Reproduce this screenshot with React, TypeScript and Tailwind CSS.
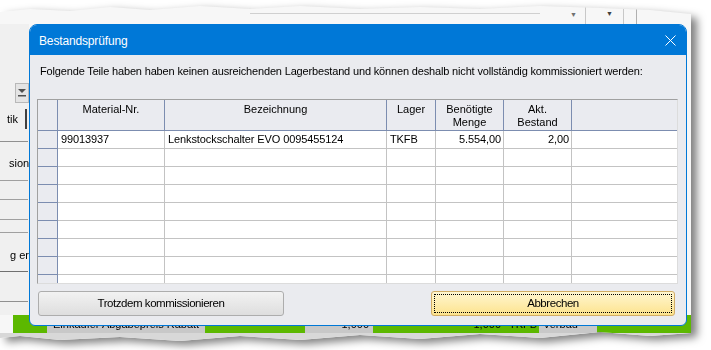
import React from "react";

const widths = ["w-[107px]", "w-[222px]", "w-[49px]", "w-[68px]", "w-[68px]"];
const heads = [["Material-Nr."], ["Bezeichnung"], ["Lager"], ["Benötigte", "Menge"], ["Akt.", "Bestand"]];
const firstRow = ["99013937", "Lenkstockschalter EVO 0095455124", "TKFB", "5.554,00", "2,00"];
const rightAligned = [false, false, false, true, true];

function Grid() {
  const rows = Array.from({ length: 9 }, (_, i) => (i === 0 ? firstRow : ["", "", "", "", ""]));
  return (
    <div className="h-[185px] overflow-hidden border border-t-[#a0a0a0] border-l-[#a0a0a0] border-r-[#dcdcdc] border-b-[#dcdcdc] bg-white">
      {/* header */}
      <div className="flex h-[31px] border-b border-[#7c8db0] bg-[#eaebf0]">
        <div className="w-[20px] shrink-0 border-r border-[#7c8db0]" />
        {heads.map((h, i) => (
          <div
            key={i}
            className={`${widths[i]} shrink-0 border-r border-[#7c8db0] pt-[3px] text-center leading-[13px]`}
          >
            {h.map((l) => (
              <div key={l}>{l}</div>
            ))}
          </div>
        ))}
        <div className="flex-1" />
      </div>
      {rows.map((r, ri) => (
        <div key={ri} className="flex h-[18px]">
          <div className="w-[20px] shrink-0 border-r border-b border-[#7c8db0] bg-[#eaebf0]" />
          {r.map((v, ci) => (
            <div
              key={ci}
              className={`${widths[ci]} shrink-0 border-r border-b border-[#c3c3c3] leading-[17px] whitespace-nowrap tracking-[-0.1px] ${
                rightAligned[ci] ? "pr-[2px] text-right" : "pl-[3px]"
              }`}
            >
              {v}
            </div>
          ))}
          <div className="flex-1 border-b border-[#c3c3c3]" />
        </div>
      ))}
    </div>
  );
}

function Dialog() {
  return (
    <div className="absolute left-[29px] top-[24px] flex h-[302px] w-[658px] flex-col overflow-hidden rounded-t-[8px] rounded-b-[6px] border border-[#0078d7] bg-[#eaebef] text-[11px] text-black">
      <div className="flex h-[30px] shrink-0 items-center justify-between bg-[#0078d7] pl-[9px] pr-[10px] pt-[1px] text-[12px] text-white">
        <span className="tracking-[-0.15px]">Bestandsprüfung</span>
        <svg width="11" height="11" viewBox="0 0 11 11" className="mt-[-1px]">
          <path d="M0.5 0.5 L10.5 10.5 M10.5 0.5 L0.5 10.5" stroke="white" strokeWidth="1" />
        </svg>
      </div>
      <div className="flex flex-1 flex-col px-[7px] pt-[9px] pr-[8px]">
        <p className="pl-[3px] leading-[14px] whitespace-nowrap tracking-[-0.16px]">
          Folgende Teile haben haben keinen ausreichenden Lagerbestand und können deshalb nicht vollständig kommissioniert werden:
        </p>
        <div className="mt-[21px]">
          <Grid />
        </div>
        <div className="mt-[7px] flex justify-between pl-[1px] pr-[3px]">
          <button className="h-[25px] w-[246px] rounded-[3px] border border-[#adadad] bg-gradient-to-b from-[#f2f2f2] to-[#dedede] text-[11.5px] tracking-[-0.45px]">
            Trotzdem kommissionieren
          </button>
          <button className="h-[25px] w-[244px] rounded-[3px] border border-[#d2ad66] bg-gradient-to-b from-[#fff6d0] to-[#fde38c] text-[11.5px] tracking-[-0.45px] outline-1 outline-dotted outline-black outline-offset-[-4px]">
            Abbrechen
          </button>
        </div>
      </div>
    </div>
  );
}

function Backdrop() {
  return (
    <div className="absolute left-0 top-0 [filter:drop-shadow(6px_4px_4px_rgba(0,0,0,0.5))]">
      <div className="flex h-[342px] w-[691px] flex-col bg-[#f7f7f7] text-[11px] [clip-path:polygon(0_12px,30px_9px,70px_11px,110px_7px,150px_10px,200px_6px,250px_9px,300px_6px,360px_9px,420px_7px,480px_9px,540px_6px,600px_8px,650px_10px,691px_14px,691px_333px,650px_336px,600px_332px,540px_338px,480px_334px,420px_339px,360px_335px,300px_340px,240px_336px,180px_341px,120px_337px,60px_340px,20px_336px,0_338px)]">
        {/* top strip */}
        <div className="flex h-[24px] shrink-0 items-end">
          <div className="ml-[250px] mb-[10px] h-px w-[290px] bg-[#d0d0d0]" />
          <div className="ml-[30px] mb-[4px] text-[7px] text-[#707070]">▼</div>
          <div className="ml-[8px] h-[20px] w-px bg-[#c8c8c8]" />
          <div className="ml-[20px] mb-[5px] text-[7px] text-[#404040]">▼</div>
          <div className="ml-[10px] h-[20px] w-px bg-[#c8c8c8]" />
          <div className="ml-[12px] h-[20px] w-px bg-[#b0b0b0]" />
        </div>
        {/* middle */}
        <div className="flex flex-1">
          <div className="flex w-[29px] flex-col bg-[#f0f0f0]">
            <div className="h-[59px]" />
            <div className="ml-[15px] flex h-[20px] w-[14px] flex-col items-center justify-center border border-[#b8b8b8] bg-[#e4e4e4]">
              <svg width="10" height="10" viewBox="0 0 10 10">
                <path d="M1 1 L9 1 L5 5 Z" fill="#505050" />
                <rect x="1" y="7" width="8" height="1.5" fill="#505050" />
              </svg>
            </div>
            <div className="mt-[6px] flex h-[20px] w-[27px] items-center border-r-2 border-[#404040] pl-[7px]">tik</div>
            <div className="mt-[12px] h-px w-[28px] bg-[#909090]" />
            <div className="mt-[10px] h-[22px] pl-[9px] leading-[22px]">sion</div>
            <div className="mt-[6px] h-px w-[28px] bg-[#a0a0a0]" />
            <div className="mt-[18px] h-px w-[28px] bg-[#a0a0a0]" />
            <div className="mt-[19px] h-px w-[28px] bg-[#a0a0a0]" />
            <div className="mt-[12px] h-px w-[28px] bg-[#a0a0a0]" />
            <div className="mt-[12px] h-[20px] pl-[10px] leading-[20px]">g er</div>
            <div className="mt-[6px] h-px w-[28px] bg-[#707070]" />
            <div className="mt-[29px] h-px w-[28px] bg-[#909090]" />
          </div>
          <div className="flex-1" />
        </div>
        {/* bottom strip */}
        <div className="flex h-[27px] shrink-0 flex-col">
          <div className="ml-[13px] flex h-[18px] items-stretch bg-[#5cb800]">
            <div className="ml-[34px] w-[158px] bg-[#c8c8c8] pl-[6px] leading-[18px]">Einkäufer Abgabepreis Rabatt</div>
            <div className="w-[100px]" />
            <div className="w-[68px] bg-[#c8c8c8] pr-[4px] text-right leading-[18px]">1,000</div>
            <div className="w-[132px] pr-[4px] text-right leading-[18px]">1,000</div>
            <div className="w-[34px] pl-[4px] leading-[18px]">TKFB</div>
            <div className="w-[58px] bg-[#c8c8c8] pl-[4px] leading-[18px]">Verbau</div>
          </div>
          <div className="flex-1 bg-[#d8d8d8]" />
        </div>
      </div>
    </div>
  );
}

export default function App() {
  return (
    <div className="relative h-[350px] w-[711px] overflow-hidden bg-white font-['Liberation_Sans',Arial,sans-serif]">
      <Backdrop />
      <Dialog />
    </div>
  );
}
